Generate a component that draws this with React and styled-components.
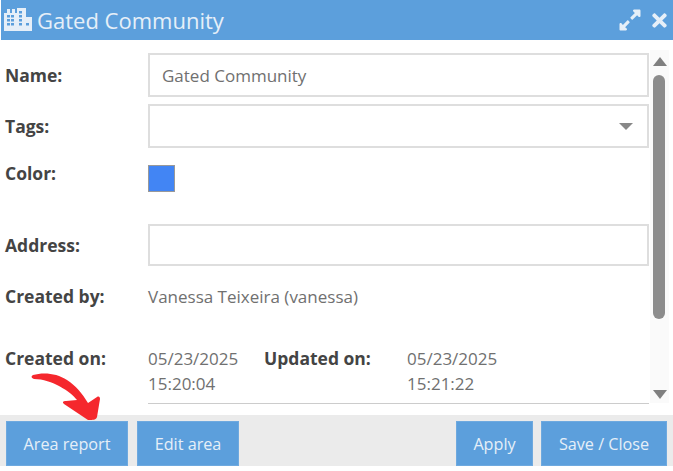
import React from 'react';
import styled, { createGlobalStyle } from 'styled-components';
import { FaTimes, FaExpandAlt } from 'react-icons/fa';

const Global = createGlobalStyle`
  html, body { margin: 0; padding: 0; background: #fff; }
  body { font-family: "Open Sans", sans-serif; color: #555; overflow: hidden; }
`;

const Dialog = styled.div`
  position: relative;
  width: 673px;
  height: 471px;
  display: flex;
  flex-direction: column;
`;

const Header = styled.div`
  height: 40px;
  margin-left: 1px;
  padding: 0 3px 0 3px;
  background: #5c9fdc;
  color: #e6eff8;
  display: flex;
  align-items: center;
  gap: 5px;
  font-size: 22px;
  flex: none;
`;

const BuildingIcon = styled.svg`
  width: 28px;
  height: 23px;
  margin-top: -1px;
  flex: none;
`;

const Title = styled.div`
  flex: 1;
  white-space: nowrap;
`;

const HeaderIcons = styled.div`
  display: flex;
  align-items: center;
  gap: 7px;
`;

const Body = styled.div`
  height: 375px;
  display: flex;
  flex: none;
`;

const Form = styled.div`
  width: 649px;
  padding: 13px 0 0 5px;
  box-sizing: border-box;
  flex: none;
  display: flex;
  flex-direction: column;
`;

const Row = styled.div`
  display: grid;
  grid-template-columns: 143px 1fr;
  height: ${p => p.$h}px;
  margin-bottom: ${p => p.$mb || 0}px;
`;

const Label = styled.div`
  font-size: 17.5px;
  font-weight: 700;
  color: #444;
  line-height: 22px;
  white-space: nowrap;
  padding-top: ${p => p.$pt || 0}px;
`;

const Input = styled.div`
  height: ${p => p.$h}px;
  box-sizing: border-box;
  border: 2px solid #dedede;
  display: flex;
  align-items: center;
  justify-content: space-between;
  padding: 0 14px 0 12px;
  font-size: 17px;
  color: #707070;
`;

const Caret = styled.span`
  width: 0;
  height: 0;
  border-left: 7px solid transparent;
  border-right: 7px solid transparent;
  border-top: 7px solid #888;
`;

const Swatch = styled.div`
  width: 27px;
  height: 27px;
  margin-top: 3px;
  box-sizing: border-box;
  background: #4285f4;
  border: 1px solid #999;
`;

const Value = styled.div`
  font-size: 17px;
  line-height: 25px;
  color: #707070;
  white-space: nowrap;
`;

const CreatedBy = styled(Value)`
  margin-top: -1px;
`;

const DateRow = styled.div`
  display: grid;
  grid-template-columns: 143px 116px 143px 1fr;
  margin-top: -1px;
  padding-bottom: 7px;
`;

const Rule = styled.div`
  height: 1px;
  margin-left: 143px;
  background: #ccc;
`;

const Scrollbar = styled.div`
  width: 19px;
  margin: 10px 0 0 1px;
  height: 353px;
  background: #fafafa;
  position: relative;
  display: flex;
  flex-direction: column;
  align-items: center;
  justify-content: space-between;
  padding: 7px 0 4px;
  box-sizing: border-box;
`;

const Arrow = styled.span`
  width: 0;
  height: 0;
  border-left: 7px solid transparent;
  border-right: 7px solid transparent;
  ${p => (p.$up ? 'border-bottom: 9px solid #808080;' : 'border-top: 9px solid #808080;')}
`;

const Thumb = styled.div`
  position: absolute;
  left: 3px;
  top: 25px;
  width: 12px;
  height: 244px;
  border-radius: 6px;
  background: #8c8c8c;
`;

const Footer = styled.div`
  height: 51px;
  flex: none;
  background: #ebebeb;
  padding: 6px 6px 0 6px;
  box-sizing: border-box;
  display: flex;
  justify-content: space-between;
`;

const ButtonGroup = styled.div`
  display: flex;
  gap: ${p => p.$gap}px;
`;

const Button = styled.div`
  height: 45px;
  width: ${p => p.$w}px;
  box-sizing: border-box;
  background: #5c9fdc;
  border: 1px solid #6ea9df;
  color: #e6eff8;
  font-size: 16.2px;
  display: flex;
  align-items: center;
  justify-content: center;
`;

const RedArrow = styled.svg`
  position: absolute;
  left: 30px;
  top: 368px;
  width: 72px;
  height: 56px;
`;

// window cut-outs for the building icon, as [x, y]
const windows = [
  [3, 7], [7, 7], [15, 3], [3, 11], [7, 11], [15, 7], [3, 15], [7, 15], [15, 11], [15, 15], [22, 15],
];
const windowPath = windows.map(([x, y]) => `M${x} ${y}h3v2.5h-3z`).join('');

export default function App() {
  return (
    <Dialog>
      <Global />
      <Header>
        <BuildingIcon viewBox="0 0 28 23">
          <path
            fillRule="evenodd"
            fill="currentColor"
            d={`M0 23V5H3V1H6V5H8V1H11V5H13V0H22V9H28V23Z${windowPath}`}
          />
        </BuildingIcon>
        <Title>Gated Community</Title>
        <HeaderIcons>
          <FaExpandAlt size={24} />
          <FaTimes size={21} />
        </HeaderIcons>
      </Header>
      <Body>
        <Form>
          <Row $h={44} $mb={7}>
            <Label $pt={11}>Name:</Label>
            <Input $h={44}>Gated Community</Input>
          </Row>
          <Row $h={44} $mb={14}>
            <Label $pt={11}>Tags:</Label>
            <Input $h={44}><span /><Caret /></Input>
          </Row>
          <Row $h={45} $mb={17}>
            <Label>Color:</Label>
            <Swatch />
          </Row>
          <Row $h={42} $mb={19}>
            <Label $pt={10}>Address:</Label>
            <Input $h={42} />
          </Row>
          <Row $h={37} $mb={25}>
            <Label>Created by:</Label>
            <CreatedBy>Vanessa Teixeira (vanessa)</CreatedBy>
          </Row>
          <DateRow>
            <Label $pt={1}>Created on:</Label>
            <Value>05/23/2025<br />15:20:04</Value>
            <Label $pt={1}>Updated on:</Label>
            <Value>05/23/2025<br />15:21:22</Value>
          </DateRow>
          <Rule />
        </Form>
        <Scrollbar>
          <Arrow $up />
          <Thumb />
          <Arrow />
        </Scrollbar>
      </Body>
      <Footer>
        <ButtonGroup $gap={9}>
          <Button $w={122}>Area report</Button>
          <Button $w={102}>Edit area</Button>
        </ButtonGroup>
        <ButtonGroup $gap={8}>
          <Button $w={77}>Apply</Button>
          <Button $w={126}>Save / Close</Button>
        </ButtonGroup>
      </Footer>
      <RedArrow viewBox="0 0 72 56">
        <path
          d="M3 7 C13 4 27 5 37 12 C46 18 52 25 58 35 L67 29 C69 28 70 29 70 31 L67 49 C66 52 63 52 58 52 C50 47 42 41 34 36 C32 34 33 33 36 33 L47 32 C41 24 22 11 4 11 C1 10 1 8 3 7 Z"
          fill="#f5272d"
        />
      </RedArrow>
    </Dialog>
  );
}
